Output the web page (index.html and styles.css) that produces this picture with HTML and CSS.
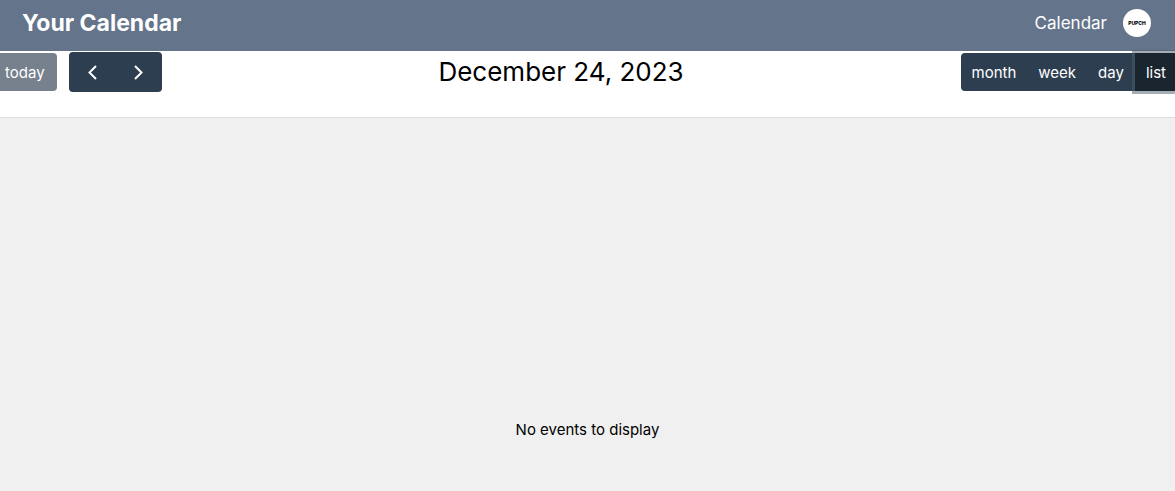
FILE: index.html
```html
<!DOCTYPE html>
<html lang="en">
<head>
<meta charset="utf-8">
<meta name="viewport" content="width=device-width, initial-scale=1">
<title>Your Calendar</title>
<link rel="stylesheet" href="styles.css">
</head>
<body>
<header class="navbar">
  <h1 class="brand">Your Calendar</h1>
  <nav class="nav">
    <a class="nav-link" href="#">Calendar</a>
    <a class="avatar" href="#"><span class="avatar-text">PUPCH</span></a>
  </nav>
</header>
<main class="calendar">
  <div class="toolbar">
    <div class="toolbar-start">
      <button class="button button-today" type="button" disabled>today</button>
      <div class="group">
        <button class="button button-arrow" type="button" aria-label="Previous day">
          <svg class="chevron" viewBox="0 0 10 16" aria-hidden="true"><path d="M9 2 2.500 8.500 9 15"/></svg>
        </button>
        <button class="button button-arrow" type="button" aria-label="Next day">
          <svg class="chevron" viewBox="0 0 10 16" aria-hidden="true"><path d="M2 2l6.500 6.500L2 15"/></svg>
        </button>
      </div>
    </div>
    <h2 class="title">December 24, 2023</h2>
    <div class="group">
      <button class="button" type="button">month</button>
      <button class="button" type="button">week</button>
      <button class="button" type="button">day</button>
      <button class="button button-active" type="button" aria-pressed="true">list</button>
    </div>
  </div>
  <section class="list-view">
    <p class="empty">No events to display</p>
  </section>
</main>
</body>
</html>
```
FILE: styles.css
```css
* {
  box-sizing: border-box;
}

body {
  display: flex;
  flex-direction: column;
  min-height: 100vh;
  margin: 0;
  overflow: hidden;
  background: #fff;
  color: #000;
  font-family: Inter, "Liberation Sans", sans-serif;
  font-size: 15px;
  line-height: 24px;
}

.navbar {
  display: flex;
  align-items: center;
  justify-content: space-between;
  padding: 5px 24px 10px 22px;
  background: #64748b;
  color: #fff;
}

.brand {
  margin: 0;
  font-size: 23px;
  font-weight: 700;
  line-height: 36px;
}

.nav {
  display: flex;
  align-items: center;
  gap: 16px;
}

.nav-link {
  color: #fff;
  font-size: 17px;
  text-decoration: none;
}

.avatar {
  display: flex;
  align-items: center;
  justify-content: center;
  width: 28px;
  height: 28px;
  border-radius: 50%;
  background: #fff;
  color: #000;
  text-decoration: none;
}

.avatar-text {
  font-size: 5px;
  font-weight: 800;
  line-height: 8px;
}

.calendar {
  display: flex;
  flex: 1;
  flex-direction: column;
}

/* The toolbar bleeds past both window edges. */
.toolbar {
  display: flex;
  align-items: center;
  justify-content: space-between;
  margin: 1px -2px 25px -7px;
}

.toolbar-start {
  display: flex;
  align-items: center;
  gap: 12px;
}

.group {
  display: flex;
}

.button {
  margin: 0;
  padding: 8px 11px 6px;
  border: 0;
  background: #2c3e50;
  color: #fff;
  font: inherit;
}

.group .button:first-child {
  border-radius: 4px 0 0 4px;
}

.group .button:last-child {
  border-radius: 0 4px 4px 0;
}

.button-today {
  padding: 8px 12px 6px;
  border-radius: 4px;
  background: #76818d;
}

.button-arrow {
  display: flex;
  align-items: center;
  justify-content: center;
  width: 46px;
  height: 40px;
  padding: 0;
}

.button-arrow + .button-arrow {
  width: 47px;
}

.chevron {
  flex: none;
  width: 10px;
  height: 16px;
  fill: none;
  stroke: #fff;
  stroke-width: 2;
}

.group .button-active {
  border-radius: 0;
  background: #1a252f;
  box-shadow: 0 0 0 3px rgba(76, 91, 106, 0.5);
}

.title {
  margin: 0;
  font-size: 26px;
  font-weight: 400;
  line-height: 36px;
}

.list-view {
  display: flex;
  flex: 1;
  align-items: flex-end;
  justify-content: center;
  padding: 49px 0;
  border-top: 1px solid #ddd;
  background: #f0f0f0;
}

.empty {
  margin: 0;
}
```
